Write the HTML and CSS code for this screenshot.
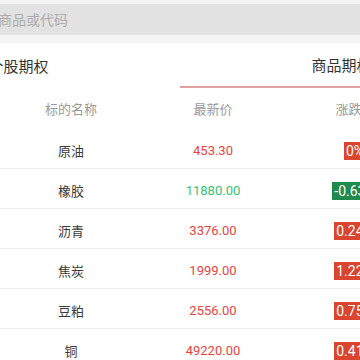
FILE: index.html
```html
<!DOCTYPE html>
<html>
<head>
<meta charset="UTF-8">
<title>商品期权</title>
<link rel="stylesheet" href="styles.css">
</head>
<body>

<div class="search-bar">
	<div class="search-box">商品或代码</div>
</div>

<div class="tabs">
	<div class="tab">个股期权</div>
	<div class="tab active">商品期权</div>
</div>

<div class="quote-table">
	<div class="row head">
		<div class="cell">标的名称</div>
		<div class="cell">最新价</div>
		<div class="cell">涨跌幅</div>
	</div>
	<div class="row">
		<div class="cell name">原油</div>
		<div class="cell price up">453.30</div>
		<div class="cell"><span class="badge up">0%</span></div>
	</div>
	<div class="row">
		<div class="cell name">橡胶</div>
		<div class="cell price down">11880.00</div>
		<div class="cell"><span class="badge down">-0.63%</span></div>
	</div>
	<div class="row">
		<div class="cell name">沥青</div>
		<div class="cell price up">3376.00</div>
		<div class="cell"><span class="badge up">0.24%</span></div>
	</div>
	<div class="row">
		<div class="cell name">焦炭</div>
		<div class="cell price up">1999.00</div>
		<div class="cell"><span class="badge up">1.22%</span></div>
	</div>
	<div class="row">
		<div class="cell name">豆粕</div>
		<div class="cell price up">2556.00</div>
		<div class="cell"><span class="badge up">0.75%</span></div>
	</div>
	<div class="row">
		<div class="cell name">铜</div>
		<div class="cell price up">49220.00</div>
		<div class="cell"><span class="badge up">0.41%</span></div>
	</div>
</div>

</body>
</html>
```

FILE: styles.css
```css
html, body {margin: 0; padding: 0; overflow: hidden; background: #ffffff;}
body {font-family: "Noto Sans CJK SC", "Noto Sans", sans-serif; color: #333333;}

.search-bar {background: #f4f4f4; padding: 4px 0 8px 0;}
.search-box {background: #e2e2e2; height: 31px; line-height: 31px; font-size: 14px; color: #acacac; text-indent: -2px;}

.tabs {display: flex; justify-content: center; height: 45px;}
.tab {flex: 0 0 323px; display: flex; align-items: center; justify-content: center; font-size: 15px; color: #333333; box-sizing: border-box;}
.tab.active {border-bottom: 2px solid #e0a1a1;}

.quote-table {width: 426px;}
.row {display: grid; grid-template-columns: 142px 142px 142px; box-sizing: border-box; height: 40px; padding-top: 4px; border-bottom: 1px solid #eeeeee; align-items: center; text-align: center;}
.row.head {height: 41px; padding-top: 0; border-bottom: none; font-size: 13px; color: #999999;}
.cell {display: flex; justify-content: center; align-items: center;}
.name {font-size: 13px; color: #3a3a3a;}
.price {font-family: Roboto, "Liberation Sans", sans-serif; font-size: 13px;}
.price.up {color: #e8433f;}
.price.down {color: #34c274;}
.badge {font-family: Roboto, "Liberation Sans", sans-serif; font-size: 14px; color: #ffffff; height: 18px; line-height: 18px; padding: 0 2px;}
.badge.up {background: #d9452f;}
.badge.down {background: #1f8a4e;}
```
